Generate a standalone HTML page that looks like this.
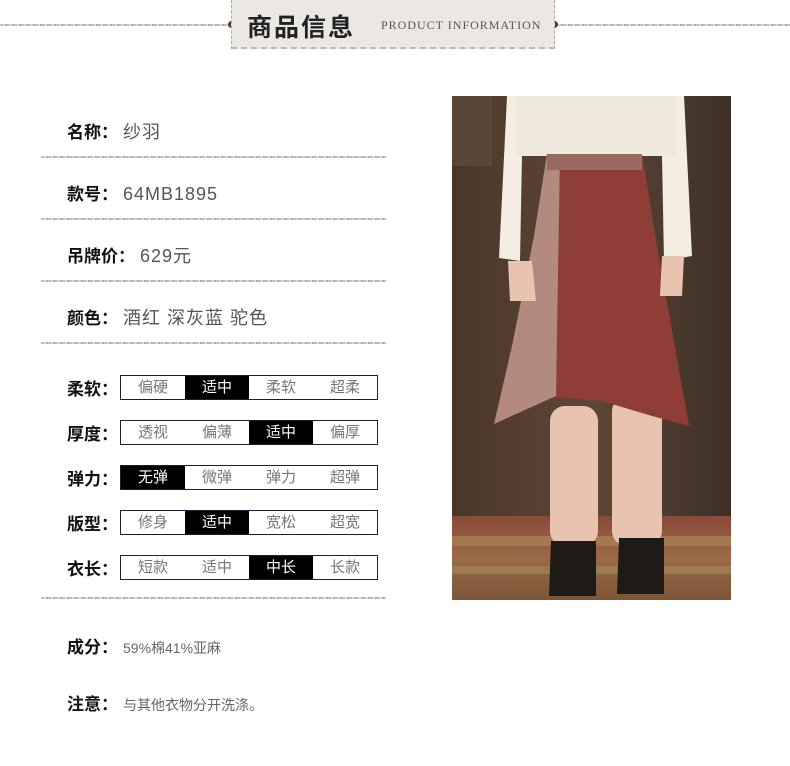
<!DOCTYPE html>
<html><head><meta charset="utf-8"><style>
body{margin:0;width:790px;height:766px;background:#fff;position:relative;overflow:hidden;font-family:"Liberation Sans","Noto Sans CJK SC",sans-serif}
.a{position:absolute}
.line{position:absolute;height:2px;background:repeating-linear-gradient(90deg,#c9bdb5 0 3px,#e3dbd6 3px 5px,#b9aba2 5px 7px)}
.lab{position:absolute;left:67px;font-size:17px;color:#111;font-weight:bold;white-space:nowrap}
.val{font-weight:normal;color:#555;font-size:18px;letter-spacing:1px;margin-left:5px}
.box{position:absolute;left:120px;width:256px;height:23px;border:1px solid #1a2030;display:flex}
.box span{flex:1;text-align:center;font-size:15px;line-height:23px;color:#777}
.box span.on{background:#000;color:#fff}
</style></head><body>
<div class="line" style="left:0;top:24px;width:230px"></div>
<div class="line" style="left:556px;top:24px;width:234px"></div>
<div class="a" style="left:228px;top:21px;width:7px;height:7px;border-radius:50%;background:#5a3a28"></div>
<div class="a" style="left:551px;top:21px;width:7px;height:7px;border-radius:50%;background:#5a3a28"></div>
<div class="a" style="left:231px;top:0;width:322px;height:47px;background:#ebe7e2;border-left:1px dashed #b7a89d;border-right:1px dashed #b7a89d;border-bottom:2px dashed #c4b6ab"></div>
<div class="a" style="left:247px;top:8px;font-size:25px;font-weight:bold;color:#222;letter-spacing:2px">商品信息</div>
<div class="a" style="left:381px;top:18px;font-family:'Liberation Serif',serif;font-size:12px;color:#555;letter-spacing:1px">PRODUCT INFORMATION</div>

<div class="lab" style="top:118px">名称：<span class="val">纱羽</span></div>
<div class="line" style="left:41px;top:156px;width:345px"></div>
<div class="lab" style="top:180px">款号：<span class="val">64MB1895</span></div>
<div class="line" style="left:41px;top:218px;width:345px"></div>
<div class="lab" style="top:242px">吊牌价：<span class="val">629元</span></div>
<div class="line" style="left:41px;top:280px;width:345px"></div>
<div class="lab" style="top:304px">颜色：<span class="val">酒红 深灰蓝 驼色</span></div>
<div class="line" style="left:41px;top:342px;width:345px"></div>

<div class="lab" style="top:375px">柔软：</div>
<div class="box" style="top:375px"><span>偏硬</span><span class="on">适中</span><span>柔软</span><span>超柔</span></div>
<div class="lab" style="top:420px">厚度：</div>
<div class="box" style="top:420px"><span>透视</span><span>偏薄</span><span class="on">适中</span><span>偏厚</span></div>
<div class="lab" style="top:465px">弹力：</div>
<div class="box" style="top:465px"><span class="on">无弹</span><span>微弹</span><span>弹力</span><span>超弹</span></div>
<div class="lab" style="top:510px">版型：</div>
<div class="box" style="top:510px"><span>修身</span><span class="on">适中</span><span>宽松</span><span>超宽</span></div>
<div class="lab" style="top:555px">衣长：</div>
<div class="box" style="top:555px"><span>短款</span><span>适中</span><span class="on">中长</span><span>长款</span></div>
<div class="line" style="left:41px;top:597px;width:345px"></div>

<div class="lab" style="top:633px">成分：<span class="val" style="font-size:14px;letter-spacing:0;color:#666">59%棉41%亚麻</span></div>
<div class="lab" style="top:690px">注意：<span class="val" style="font-size:14px;letter-spacing:0;color:#666">与其他衣物分开洗涤。</span></div>

<svg class="a" style="left:452px;top:96px" width="279" height="504" viewBox="0 0 279 504">
<defs><linearGradient id="w" x1="0" x2="1"><stop offset="0" stop-color="#4a3628"/><stop offset=".5" stop-color="#5d4737"/><stop offset="1" stop-color="#3e2f25"/></linearGradient>
<linearGradient id="r" x1="0" y1="0" x2="0" y2="1"><stop offset="0" stop-color="#8a4a38"/><stop offset=".5" stop-color="#9a6a48"/><stop offset="1" stop-color="#7a5638"/></linearGradient></defs>
<rect width="279" height="504" fill="url(#w)"/>
<rect x="0" y="0" width="40" height="70" fill="#5a4636"/>
<rect x="0" y="420" width="279" height="84" fill="url(#r)"/>
<rect x="0" y="440" width="279" height="10" fill="#b08a5a" opacity=".6"/>
<rect x="0" y="470" width="279" height="8" fill="#a48a5e" opacity=".6"/>
<path d="M55 0H232L240 160L212 165L210 60H70L68 165L47 162Z" fill="#f3ede2"/>
<path d="M65 0H225V60H65Z" fill="#efe8dc"/>
<rect x="98" y="310" width="48" height="140" rx="15" fill="#e8c4b0"/>
<rect x="160" y="300" width="50" height="150" rx="15" fill="#e8c4b0"/>
<path d="M95 58H190L205 150L237 330L200 320L150 305L90 300L42 328L60 250L82 140Z" fill="#8e3e36"/>
<path d="M95 58H108L104 300L42 328L60 250L82 140Z" fill="#b28a80"/>
<rect x="95" y="58" width="95" height="16" fill="#9a6a60"/>
<path d="M56 165h24l4 40h-26z" fill="#e8c4b0"/>
<path d="M210 160h22l-2 40h-22z" fill="#e8c4b0"/>
<path d="M99 445h45v55h-47z" fill="#1e1a18"/>
<path d="M167 442h45v56h-47z" fill="#1e1a18"/>
</svg>
</body></html>
